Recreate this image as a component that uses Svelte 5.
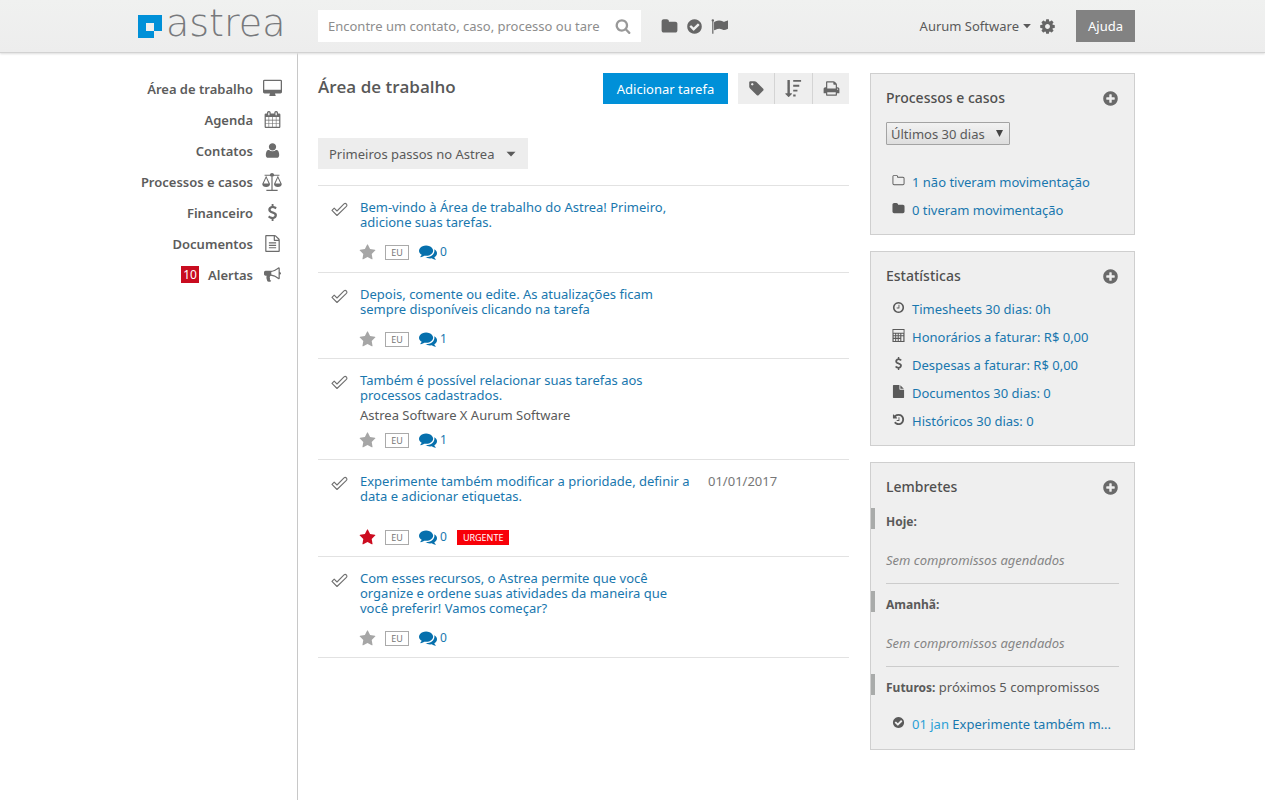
<script>
  const disc = 'M1664 896q0 209-103 385.5t-279.5 279.5-385.5 103-385.5-103-279.5-279.5-103-385.5 103-385.5 279.5-279.5 385.5-103 385.5 103 279.5 279.5 103 385.5z';

  const icons = {
    folder: 'M1728 608v704q0 92-66 158t-158 66h-1216q-92 0-158-66t-66-158v-960q0-92 66-158t158-66h320q92 0 158 66t66 158v32h672q92 0 158 66t66 158z',
    folderOpen: 'M1600 1312v-704q0-40-28-68t-68-28h-704q-40 0-68-28t-28-68v-64q0-40-28-68t-68-28h-320q-40 0-68 28t-28 68v960q0 40 28 68t68 28h1216q40 0 68-28t28-68zm128-704v704q0 92-66 158t-158 66h-1216q-92 0-158-66t-66-158v-960q0-92 66-158t158-66h320q92 0 158 66t66 158v32h672q92 0 158 66t66 158z',
    checkCircle: 'M1412 734q0-28-18-46l-91-90q-19-19-45-19t-45 19l-408 407-226-226q-19-19-45-19t-45 19l-91 90q-18 18-18 46 0 27 18 45l362 362q19 19 45 19 27 0 46-19l543-543q18-18 18-45z' + disc,
    flag: 'M320 256q0 72-64 110v1266q0 13-9.5 22.5t-22.5 9.5h-64q-13 0-22.5-9.5t-9.5-22.5v-1266q-64-38-64-110 0-53 37.5-90.5t90.5-37.5 90.5 37.5 37.5 90.5zm1472 64v763q0 25-12.5 38.5t-39.5 27.5q-215 116-369 116-61 0-123.5-22t-108.5-48-115.5-48-142.5-22q-192 0-464 146-17 9-33 9-26 0-45-19t-19-45v-742q0-32 31-55 21-14 79-43 236-120 421-120 107 0 200 29t219 88q38 19 88 19 54 0 117.5-21t110-47 88-47 54.5-21q26 0 45 19t19 45z',
    search: 'M1216 832q0-185-131.5-316.5t-316.5-131.5-316.5 131.5-131.5 316.5 131.5 316.5 316.5 131.5 316.5-131.5 131.5-316.5zm512 832q0 52-38 90t-90 38q-54 0-90-38l-343-342q-179 124-399 124-143 0-273.5-55.5t-225-150-150-225-55.5-273.5 55.5-273.5 150-225 225-150 273.5-55.5 273.5 55.5 225 150 150 225 55.5 273.5q0 220-124 399l343 343q37 37 37 90z',
    cog: 'M1152 896q0-106-75-181t-181-75-181 75-75 181 75 181 181 75 181-75 75-181zm512-109v222q0 12-8 23t-20 13l-185 28q-19 54-39 91 35 50 107 138 10 12 10 25t-9 23q-27 37-99 108t-94 71q-12 0-26-9l-138-108q-44 23-91 38-16 136-29 186-7 28-36 28h-222q-14 0-24.5-8.5t-11.5-21.5l-28-184q-49-16-90-37l-141 107q-10 9-25 9-14 0-25-11-126-114-165-168-7-10-7-23 0-12 8-23 15-21 51-66.5t54-70.5q-27-50-41-99l-183-27q-13-2-21-12.5t-8-23.5v-222q0-12 8-23t19-13l186-28q14-46 39-92-40-57-107-138-10-12-10-24 0-10 9-23 26-36 98.5-107.5t94.5-71.5q13 0 26 10l138 107q44-23 91-38 16-136 29-186 7-28 36-28h222q14 0 24.5 8.5t11.5 21.5l28 184q49 16 90 37l142-107q9-9 24-9 13 0 25 10 129 119 165 170 7 8 7 22 0 12-8 23-15 21-51 66.5t-54 70.5q26 50 41 98l183 28q13 2 21 12.5t8 23.5z',
    star: 'M1728 647q0 22-26 48l-363 354 86 500q1 7 1 20 0 21-10.5 35.5t-30.5 14.5q-19 0-40-12l-449-236-449 236q-22 12-40 12-21 0-31.5-14.5t-10.5-35.5q0-6 2-20l86-500-364-354q-25-27-25-48 0-37 56-46l502-73 225-455q19-41 49-41t49 41l225 455 502 73q56 9 56 46z',
    comments: 'M1408 768q0 139-94 257t-256.5 186.5-353.5 68.5q-86 0-176-16-124 88-278 128-36 9-86 16h-3q-11 0-20.5-8t-11.5-21q-1-3-1-6.5t.5-6.5 2-6l2.5-5 3.5-5.5 4-5 4.5-5 4-4.5q5-6 23-25t26-29.5 22.5-29 25-38.5 20.5-44q-124-72-195-177t-71-224q0-139 94-257t256.5-186.5 353.5-68.5 353.5 68.5 256.5 186.5 94 257zm384 256q0 120-71 224.5t-195 176.5q10 24 20.5 44t25 38.5 22.5 29 26 29.5 23 25q1 1 4 4.5t4.5 5 4 5 3.5 5.5l2.5 5 2 6 .5 6.5-1 6.5q-3 14-13 22t-22 7q-50-7-86-16-154-40-278-128-90 16-176 16-271 0-472-132 58 4 88 4 161 0 309-45t264-129q125-92 192-212t67-254q0-77-23-152 129 71 204 178t75 230z',
    plus: 'M1344 960v-128q0-26-19-45t-45-19h-256v-256q0-26-19-45t-45-19h-128q-26 0-45 19t-19 45v256h-256q-26 0-45 19t-19 45v128q0 26 19 45t45 19h256v256q0 26 19 45t45 19h128q26 0 45-19t19-45v-256h256q26 0 45-19t19-45z' + disc,
    tag: 'M576 448q0-53-37.5-90.5t-90.5-37.5-90.5 37.5-37.5 90.5 37.5 90.5 90.5 37.5 90.5-37.5 37.5-90.5zm1067 576q0 53-37 90l-491 492q-39 37-91 37-53 0-90-37l-715-716q-38-37-64.5-101t-26.5-117v-416q0-52 38-90t90-38h416q53 0 117 26.5t102 64.5l715 714q37 39 37 91z',
    sort: 'M736 1440q0 12-10 24l-319 319q-10 9-23 9-12 0-23-9l-320-320q-15-16-7-35 8-20 30-20h192v-1376q0-14 9-23t23-9h192q14 0 23 9t9 23v1376h192q14 0 23 9t9 23zM864 0h832v192h-832zM864 512h640v192h-640zM864 1024h448v192h-448zM864 1536h256v192h-256z',
    print: 'M448 1536h896v-256h-896v256zm0-640h896v-384h-160q-40 0-68-28t-28-68v-160h-640v640zm1152 64q0-26-19-45t-45-19-45 19-19 45 19 45 45 19 45-19 19-45zm128 0v416q0 13-9.5 22.5t-22.5 9.5h-224v160q0 40-28 68t-68 28h-960q-40 0-68-28t-28-68v-160h-224q-13 0-22.5-9.5t-9.5-22.5v-416q0-79 56.5-135.5t135.5-56.5h64v-544q0-40 28-68t68-28h672q40 0 88 20t76 48l152 152q28 28 48 76t20 88v256h64q79 0 135.5 56.5t56.5 135.5z',
    desktop: 'M1728 992v-832q0-13-9.5-22.5t-22.5-9.5h-1600q-13 0-22.5 9.5t-9.5 22.5v832q0 13 9.5 22.5t22.5 9.5h1600q13 0 22.5-9.5t9.5-22.5zm128-832v1088q0 66-47 113t-113 47h-544q0 37 16 77.5t32 71 16 43.5q0 26-19 45t-45 19h-512q-26 0-45-19t-19-45q0-14 16-44t32-70 16-78h-544q-66 0-113-47t-47-113v-1088q0-66 47-113t113-47h1600q66 0 113 47t47 113z',
    calendar: 'M192 1664h288v-288h-288v288zm352 0h320v-288h-320v288zm-352-352h288v-320h-288v320zm352 0h320v-320h-320v320zm-352-384h288v-288h-288v288zm736 736h320v-288h-320v288zm-384-736h320v-288h-320v288zm768 736h288v-288h-288v288zm-384-352h320v-320h-320v320zm-352-864v-288h-128v288h128zm736 864h288v-320h-288v320zm-384-384h320v-288h-320v288zm384 0h288v-288h-288v288zm32-480v-288h-128v288h128zm384-64v1280q0 52-38 90t-90 38h-1408q-52 0-90-38t-38-90v-1280q0-52 38-90t90-38h128v-96q0-66 47-113t113-47h64q66 0 113 47t47 113v96h384v-96q0-66 47-113t113-47h64q66 0 113 47t47 113v96h128q52 0 90 38t38 90z',
    user: 'M1600 1405q0 120-73 189.5t-194 69.5h-874q-121 0-194-69.5t-73-189.5q0-53 3.500-103.500t14-109 26.500-108.500 43-97.500 62-81 85.500-53.500 111.500-20q131 138 358 138t358-138q61 0 111.500 20t85.500 53.500 62 81 43 97.500 26.500 108.500 14 109 3.500 103.500zm-320-893q0 159-112.500 271.500t-271.500 112.500-271.500-112.500-112.500-271.500 112.500-271.500 271.500-112.500 271.500 112.500 112.500 271.500z',
    dollar: 'M1362 1185q0 153-99.5 263.5t-258.5 136.5v175q0 14-9 23t-23 9h-135q-13 0-22.5-9.5t-9.5-22.5v-175q-66-9-127.5-31t-101.5-44.5-74-48-46.5-37.5-17.5-18q-17-21-2-41l103-135q7-10 23-12 15-2 24 9l2 2q113 99 243 125 37 8 74 8 81 0 142.5-43t61.5-122q0-28-15-53t-33.5-42-58.5-37.5-66-32-80-32.5q-39-16-61.5-25t-61.5-26.5-62.5-31-56.5-35.5-53.5-42.5-43.5-49-35.5-58-21-66.5-8.5-78q0-138 98-242t255-134v-180q0-13 9.5-22.5t22.5-9.5h135q14 0 23 9t9 23v176q57 6 110.5 23t87 33.5 63.5 37.5 39 29 15 14q17 18 5 38l-81 146q-8 15-23 16-14 3-27-7-3-3-14.5-12t-39-26.5-58.5-32-74.5-26-85.5-11.5q-95 0-155 43t-60 111q0 26 8.5 48t29.5 41.5 39.5 33 56 31 60.5 27 70 27.5q53 20 81 31.5t76 35 75.5 42.5 62 50 53 63.5 31.5 76.5 13 94z',
    fileText: 'M1596 380q28 28 48 76t20 88v1152q0 40-28 68t-68 28h-1344q-40 0-68-28t-28-68v-1600q0-40 28-68t68-28h896q40 0 88 20t76 48zm-444-244v376h376q-10-29-22-41l-313-313q-12-12-41-22zm384 1528v-1024h-416q-40 0-68-28t-28-68v-416h-768v1536h1280zm-1024-864q0-14 9-23t23-9h704q14 0 23 9t9 23v64q0 14-9 23t-23 9h-704q-14 0-23-9t-9-23v-64zm736 224q14 0 23 9t9 23v64q0 14-9 23t-23 9h-704q-14 0-23-9t-9-23v-64q0-14 9-23t23-9h704zm0 256q14 0 23 9t9 23v64q0 14-9 23t-23 9h-704q-14 0-23-9t-9-23v-64q0-14 9-23t23-9h704z',
    file: 'M1152 512v-472q22 14 36 28l408 408q14 14 28 36h-472zm-128 32q0 40 28 68t68 28h544v1056q0 40-28 68t-68 28h-1344q-40 0-68-28t-28-68v-1600q0-40 28-68t68-28h800v544z',
    bullhorn: 'M1664 640q53 0 90.5 37.5t37.5 90.5-37.5 90.5-90.5 37.5v384q0 52-38 90t-90 38q-417-347-812-380-58 19-91 66t-31 100.5 40 92.5q-20 33-23 65.5t6 58 33.5 55 48 50 61.5 50.5q-29 58-111.5 83t-168.5 11.5-132-55.5q-7-23-29.5-87.5t-32-94.5-23-89-15-101 3.5-98.5 22-110.5h-122q-66 0-113-47t-47-113v-192q0-66 47-113t113-47h480q435 0 896-384 52 0 90 38t38 90v384zm-128 604v-954q-394 302-768 343v270q377 42 768 341z',
    scales: 'M230 240H700Q730 90 896 90T1092 240H1562V340H1100Q1070 390 950 405V1600H1400V1710H392V1600H842V405Q722 390 692 340H230zM370 340L20 1080Q40 1340 370 1340T720 1080zM370 540L590 1040H150zM1422 340L1072 1080Q1092 1340 1422 1340T1772 1080zM1422 540L1642 1040H1202z',
    clock: 'M1024 544v448q0 14-9 23t-23 9h-320q-14 0-23-9t-9-23v-64q0-14 9-23t23-9h224v-352q0-14 9-23t23-9h64q14 0 23 9t9 23zm416 352q0-148-73-273t-198-198-273-73-273 73-198 198-73 273 73 273 198 198 273 73 273-73 198-198 73-273z' + disc,
    calculator: 'M64 0h1664v1792h-1664zM192 128v384h1408v-384zM224 660v210h210v-210zM576 660v210h210v-210zM928 660v210h210v-210zM1290 660v210h270v-210zM224 1010v210h210v-210zM576 1010v210h210v-210zM928 1010v210h210v-210zM224 1370v270h210v-270zM576 1370v270h210v-270zM928 1370v270h210v-270zM1290 1010v630h270v-630z',
    history: 'M1664 896q0 156-61 298t-164 245-245 164-298 61q-172 0-327-72.5t-264-204.5q-7-10-6.5-22.5t8.5-20.5l137-138q10-9 25-9 16 2 23 12 73 95 179 147t225 52q104 0 198.5-40.5t163.5-109.5 109.5-163.5 40.5-198.5-40.5-198.5-109.5-163.5-163.5-109.5-198.5-40.5q-98 0-188 35.5t-160 101.5l137 138q31 30 14 69-17 40-59 40h-448q-26 0-45-19t-19-45v-448q0-42 40-59 39-17 69 14l130 129q107-101 244.5-156.5t284.5-55.5q156 0 298 61t245 164 164 245 61 298zm-640-288v448q0 14-9 23t-23 9h-320q-14 0-23-9t-9-23v-64q0-14 9-23t23-9h224v-352q0-14 9-23t23-9h64q14 0 23 9t9 23z',
    caret: 'M320 608h1152l-576 608z'
  };

  const menu = [
    { label: 'Área de trabalho', icon: 'desktop', size: 19 },
    { label: 'Agenda', icon: 'calendar', size: 17 },
    { label: 'Contatos', icon: 'user', size: 17 },
    { label: 'Processos e casos', icon: 'scales', size: 20 },
    { label: 'Financeiro', icon: 'dollar', size: 17 },
    { label: 'Documentos', icon: 'fileText', size: 17 },
    { label: 'Alertas', icon: 'bullhorn', size: 17, count: 10 }
  ];

  const tasks = [
    { title: 'Bem-vindo à Área de trabalho do Astrea! Primeiro, adicione suas tarefas.', comments: 0 },
    { title: 'Depois, comente ou edite. As atualizações ficam sempre disponíveis clicando na tarefa', comments: 1 },
    { title: 'Também é possível relacionar suas tarefas aos processos cadastrados.', comments: 1, related: 'Astrea Software X Aurum Software' },
    { title: 'Experimente também modificar a prioridade, definir a data e adicionar etiquetas.', comments: 0, date: '01/01/2017', starred: true, label: 'URGENTE' },
    { title: 'Com esses recursos, o Astrea permite que você organize e ordene suas atividades da maneira que você preferir! Vamos começar?', comments: 0 }
  ];

  const cases = [
    { text: '1 não tiveram movimentação', icon: 'folderOpen' },
    { text: '0 tiveram movimentação', icon: 'folder' }
  ];

  const stats = [
    { text: 'Timesheets 30 dias: 0h', icon: 'clock' },
    { text: 'Honorários a faturar: R$ 0,00', icon: 'calculator' },
    { text: 'Despesas a faturar: R$ 0,00', icon: 'dollar' },
    { text: 'Documentos 30 dias: 0', icon: 'file' },
    { text: 'Históricos 30 dias: 0', icon: 'history' }
  ];
</script>

{#snippet icon(name, size)}
  <svg class="icon" width={size} height={size} viewBox={name === 'desktop' ? '-64 -64 1920 1920' : '0 0 1792 1792'} aria-hidden="true">
    <path d={icons[name]} fill-rule="evenodd" />
  </svg>
{/snippet}

{#snippet panelHead(title)}
  <div class="panel-head">
    <h2>{title}</h2>
    <button class="plain" aria-label="Adicionar">{@render icon('plus', 17)}</button>
  </div>
{/snippet}

{#snippet linkList(items)}
  <ul class="links">
    {#each items as item}
      <li>{@render icon(item.icon, 13)}<a href="#/">{item.text}</a></li>
    {/each}
  </ul>
{/snippet}

<header>
  <div class="wrap bar">
    <a class="logo" href="#/">
      <svg width="24" height="23" viewBox="0 0 24 23" aria-hidden="true">
        <path fill="#0090d8" fill-rule="evenodd" d="M0 0h24v16h-8v7H0zM8 8v8h8V8z" />
      </svg>
      <span>astrea</span>
    </a>
    <form class="search">
      <input type="text" aria-label="Buscar" placeholder="Encontre um contato, caso, processo ou tare" />
      <button type="button" class="plain" aria-label="Buscar">{@render icon('search', 16)}</button>
    </form>
    <nav class="quick">
      <button class="plain" aria-label="Processos">{@render icon('folder', 17)}</button>
      <button class="plain" aria-label="Tarefas">{@render icon('checkCircle', 17)}</button>
      <button class="plain" aria-label="Prazos">{@render icon('flag', 17)}</button>
    </nav>
    <button class="plain account">Aurum Software {@render icon('caret', 12)}</button>
    <button class="plain gear" aria-label="Configurações">{@render icon('cog', 17)}</button>
    <button class="help">Ajuda</button>
  </div>
</header>

<div class="wrap page">
  <nav class="side">
    {#each menu as item}
      <a href="#/">
        {#if item.count}<span class="count">{item.count}</span>{/if}
        <span>{item.label}</span>
        <span class="slot">{@render icon(item.icon, item.size)}</span>
      </a>
    {/each}
  </nav>

  <main>
    <div class="top">
      <h1>Área de trabalho</h1>
      <button class="add">Adicionar tarefa</button>
      <div class="tools">
        <button aria-label="Etiquetas">{@render icon('tag', 17)}</button>
        <button aria-label="Ordenar">{@render icon('sort', 17)}</button>
        <button aria-label="Imprimir">{@render icon('print', 17)}</button>
      </div>
    </div>
    <button class="filter">Primeiros passos no Astrea {@render icon('caret', 14)}</button>
    <ul class="tasks">
      {#each tasks as task}
        <li>
          <button class="plain done" aria-label="Concluir">
            <svg width="17" height="15" viewBox="0 0 17 15" aria-hidden="true">
              <path d="M1 8.400 3.200 6.200 6 9 13 1.900Q14.300.900 15.400 2 16.400 3.200 15.400 4.400L6 13.500Z" fill="#fff" stroke="#707070" stroke-width="1.100" stroke-linejoin="round" />
            </svg>
          </button>
          <div class="body">
            <div class="line">
              <a class="title" href="#/">{task.title}</a>
              {#if task.date}<time>{task.date}</time>{/if}
            </div>
            {#if task.related}<p class="related">{task.related}</p>{/if}
            <div class="meta" class:close={task.related} class:far={task.date}>
              <button class="plain star" class:on={task.starred} aria-label="Prioridade">{@render icon('star', 17)}</button>
              <span class="who">EU</span>
              <a class="talk" href="#/">{@render icon('comments', 18)}<span>{task.comments}</span></a>
              {#if task.label}<span class="label">{task.label}</span>{/if}
            </div>
          </div>
        </li>
      {/each}
    </ul>
  </main>

  <aside>
    <section>
      {@render panelHead('Processos e casos')}
      <div class="period">
        <select aria-label="Período"><option>Últimos 30 dias</option></select>
        <svg width="7" height="8" viewBox="0 0 7 8" aria-hidden="true"><path d="M0 1h7L3.5 8z" fill="#444" /></svg>
      </div>
      {@render linkList(cases)}
    </section>
    <section>
      {@render panelHead('Estatísticas')}
      {@render linkList(stats)}
    </section>
    <section>
      {@render panelHead('Lembretes')}
      {#each ['Hoje:', 'Amanhã:'] as day}
        <div class="day">
          <h3><b>{day}</b></h3>
          <p>Sem compromissos agendados</p>
        </div>
      {/each}
      <div class="day last">
        <h3><b>Futuros:</b> próximos 5 compromissos</h3>
        <ul class="links">
          <li>
            {@render icon('checkCircle', 13)}
            <a href="#/"><span class="when">01 jan</span> Experimente também m...</a>
          </li>
        </ul>
      </div>
    </section>
  </aside>
</div>

<style>
  :global(body) {
    margin: 0;
    background: #fff;
    color: #5a5a5a;
    font: 13px/20px 'Noto Sans', 'Open Sans', sans-serif;
  }
  h1, h2, h3, p, ul { margin: 0; padding: 0; font-weight: 400; }
  ul { list-style: none; }
  a { color: #1977ae; text-decoration: none; }
  button, input, select { font: inherit; color: inherit; border: 0; border-radius: 0; margin: 0; padding: 0; }
  button { cursor: pointer; }
  .plain { background: none; display: flex; align-items: center; }
  .icon { display: block; flex: none; fill: currentColor; }
  .wrap { box-sizing: border-box; max-width: 1005px; margin: 0 auto; }

  header {
    background: linear-gradient(#f0f1f0, #ededed);
    border-bottom: 1px solid #d2d2d2;
    box-shadow: 0 1px 2px #ddd;
    position: relative;
  }
  .bar { display: flex; align-items: center; height: 52px; }
  .logo { display: flex; align-items: center; gap: 4px; width: 180px; padding-left: 8px; box-sizing: border-box; height: 46px; }
  .logo span { font: 200 38px/40px 'DejaVu Sans Light', 'DejaVu Sans', sans-serif; color: #77797c; height: 46px; }
  .search { display: flex; align-items: center; width: 323px; height: 32px; margin-left: 8px; background: #fff; box-sizing: border-box; padding: 0 10px; }
  .search input { flex: 1; min-width: 0; height: 32px; background: none; outline: 0; margin-right: 5px; }
  .search input::placeholder { color: #8d8d8d; opacity: 1; }
  .search .plain { color: #999; }
  .quick { display: flex; gap: 8px; margin-left: 20px; color: #666; flex: 1; }
  .account { gap: 2px; }
  .gear { margin-left: 6px; color: #666; }
  .help { margin-left: 20px; width: 59px; height: 32px; background: #828282; color: #fff; }

  .page { display: grid; grid-template-columns: 168px minmax(0, 1fr) 265px; min-height: calc(100vh - 53px); }
  .side { border-right: 1px solid #c8c8c8; padding: 20px 15px 0 0; }
  .side a { display: flex; align-items: center; justify-content: flex-end; height: 31px; color: #5c5c5c; font-weight: 600; white-space: nowrap; }
  .slot { display: flex; justify-content: center; width: 20px; margin-left: 9px; color: #6c6c6c; }
  .count { background: #c90c20; color: #fff; font-weight: 400; font-size: 12px; line-height: 17px; width: 18px; text-align: center; margin-right: 9px; }

  main { padding: 20px 21px 20px 20px; }
  .top { display: flex; align-items: center; height: 31px; }
  h1 { flex: 1; font: 600 17px/28px 'Open Sans', sans-serif; align-self: flex-start; color: #585858; }
  .add { width: 125px; height: 31px; background: #0090d8; color: #fff; }
  .tools { display: flex; gap: 1px; margin-left: 10px; background: #d4d4d4; }
  .tools button { display: flex; align-items: center; justify-content: center; width: 36px; height: 31px; background: #eee; color: #666; }
  .tools button:nth-child(2) { width: 37px; }
  .filter { display: flex; align-items: center; gap: 10px; margin-top: 34px; height: 31px; padding: 0 10px 0 11px; background: #ededed; }

  .tasks { margin-top: 16px; border-bottom: 1px solid #e2e2e2; }
  .tasks li { display: flex; align-items: flex-start; border-top: 1px solid #e2e2e2; padding: 14px 0 10px 13px; }
  .tasks li:first-child { padding-bottom: 11px; }
  .done { margin-top: 2px; }
  .body { margin-left: 12px; flex: 1; }
  .line { display: flex; gap: 10px; line-height: 15px; }
  .title { width: 338px; }
  time { color: #777; }
  .related { line-height: 24px; }
  .meta { display: flex; align-items: center; height: 16px; margin-top: 14px; margin-bottom: 1px; }
  .meta.close { margin-top: 5px; }
  .meta.far { margin-top: 25px; }
  .star { color: #a6a6a6; margin-left: -1px; }
  .star.on { color: #cc0c20; }
  .who { border: 1px solid #aaa; color: #777; background: #fff; font-size: 9px; line-height: 13px; width: 22px; text-align: center; margin-left: 9px; }
  .talk { display: flex; align-items: center; gap: 3px; margin-left: 10px; line-height: 16px; font-size: 12px; }
  .talk .icon { color: #0670ad; }
  .label { margin-left: 10px; background: #f80008; color: #fff; font-size: 9px; line-height: 15px; padding: 0 6px; }

  aside { padding: 20px 0; display: flex; flex-direction: column; gap: 16px; }
  section { border: 1px solid #cfcfcf; background: #efefef; padding: 14px 15px 10px; }
  .panel-head { display: flex; align-items: center; justify-content: space-between; height: 20px; color: #6a6a6a; }
  h2 { font-size: 14px; font-weight: 500; color: #505050; }
  .period { position: relative; width: 124px; margin: 14px 0 23px; }
  .period svg { position: absolute; right: 7px; top: 7px; pointer-events: none; }
  select { display: block; appearance: none; box-sizing: border-box; width: 124px; height: 23px; padding: 0 0 0 4px; border: 1px solid #a3a3a3; border-radius: 1px; background: linear-gradient(#f2f2f2, #dedede); }
  .links { margin-top: 9px; }
  .period + .links { margin-top: 0; }
  .links li { display: flex; align-items: center; gap: 7px; height: 28px; padding-left: 6px; }
  .links .icon { margin-bottom: 3px; }
  .links a { white-space: nowrap; }
  .when { color: #2b9fd6; }
  .day { padding: 7px 0 13px; border-bottom: 1px solid #ccc; }
  .panel-head + .day { margin-top: 4px; }
  h3 { height: 21px; font-size: 13px; line-height: 26px; margin-left: -15px; padding-left: 11px; border-left: 4px solid #a9abaa; white-space: nowrap; }
  h3 b { font-size: 12px; }
  .day p { margin-top: 21px; font-style: italic; font-size: 13px; color: #858585; }
  .day.last { border: 0; padding-bottom: 1px; }
  .day.last .links { margin-top: 15px; }
</style>
